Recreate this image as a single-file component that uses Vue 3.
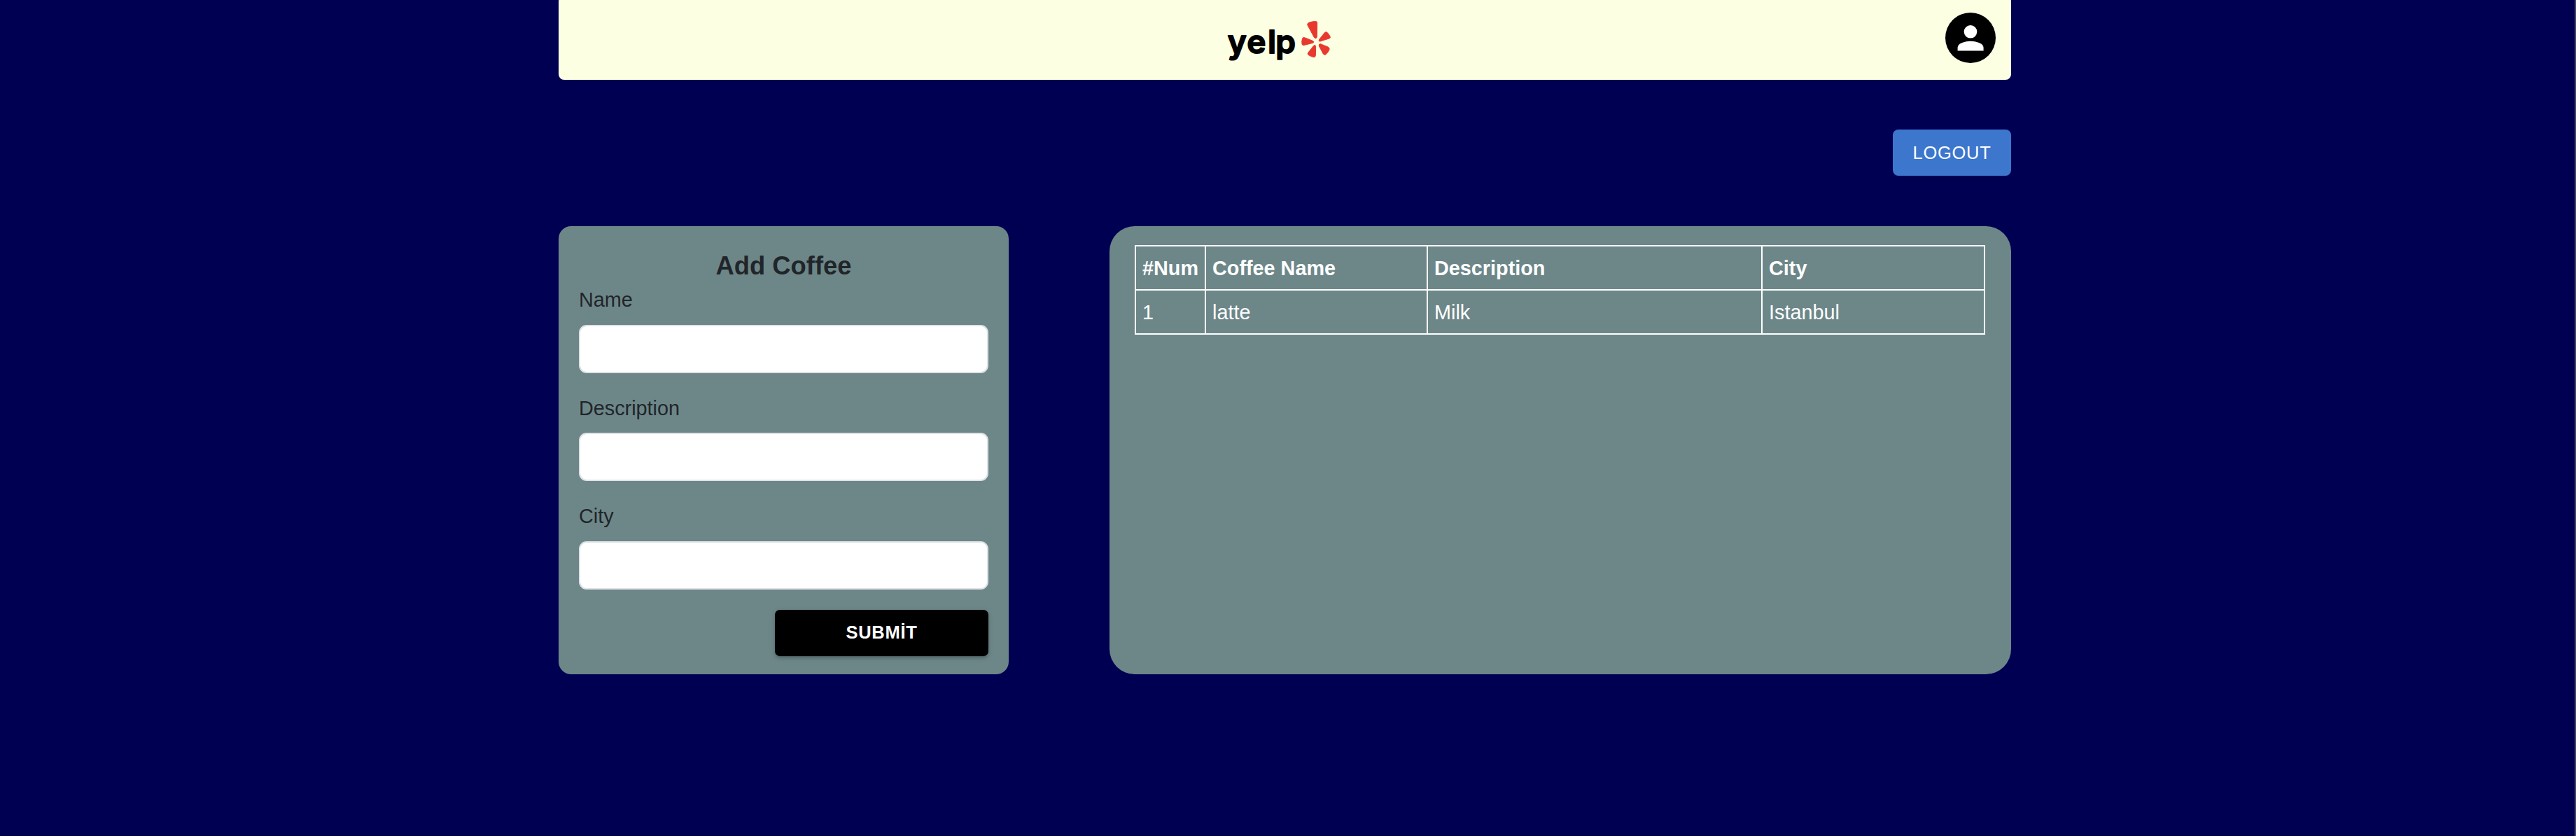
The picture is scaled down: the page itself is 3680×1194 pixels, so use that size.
<script setup>
const fields = ['Name', 'Description', 'City']
const columns = ['#Num', 'Coffee Name', 'Description', 'City']
const coffees = [{ id: 1, name: 'latte', description: 'Milk', city: 'Istanbul' }]
</script>

<template>
  <div class="page">
    <div class="container">
      <header class="navbar">
        <svg class="logo" viewBox="32 0 570 312" role="img" aria-label="yelp">
          <g class="word">
            <text x="66" y="187">y</text>
            <text x="143" y="187">e</text>
            <text x="226" y="187">l</text>
            <text x="258" y="187">p</text>
          </g>
          <g class="burst">
            <path d="M413 78Q410 71 418 67Q433 61 450 62Q454 63 454 68L453 129Q450 137 444 133L441 130Z" />
            <path d="M463 139L487 109Q492 105 497 109Q506 118 510 128Q511 133 505 135L467 147Q459 148 463 139Z" />
            <path d="M468 158L502 172Q508 176 506 183Q500 196 490 204Q485 207 480 201L462 167Q460 158 468 158Z" />
            <path d="M448 170L447 208Q446 215 440 215Q427 213 416 205Q412 201 415 196L439 166Q447 160 448 170Z" />
            <path d="M436 154L396 164Q391 165 389 159Q387 145 391 134Q395 129 400 131L435 145Q443 150 436 154Z" />
          </g>
        </svg>
        <svg class="avatar" viewBox="0 0 72 72" aria-label="Account">
          <circle cx="36" cy="36" r="36" />
          <circle class="fg" cx="36" cy="27.3" r="9.3" />
          <path class="fg" d="M17.6 54.6V50C17.6 43.5 29 40.7 36 40.7S54.6 43.5 54.6 50V54.6Z" />
        </svg>
      </header>

      <div class="actions"><button class="logout">LOGOUT</button></div>

      <main class="content">
        <form class="card form" @submit.prevent>
          <h4>Add Coffee</h4>
          <div v-for="f in fields" :key="f" class="field">
            <label :for="f">{{ f }}</label>
            <input :id="f" type="text" />
          </div>
          <button class="submit">SUBMİT</button>
        </form>

        <section class="card list">
          <table>
            <thead>
              <tr><th v-for="c in columns" :key="c">{{ c }}</th></tr>
            </thead>
            <tbody>
              <tr v-for="c in coffees" :key="c.id">
                <td>{{ c.id }}</td>
                <td>{{ c.name }}</td>
                <td>{{ c.description }}</td>
                <td>{{ c.city }}</td>
              </tr>
            </tbody>
          </table>
        </section>
      </main>
    </div>
  </div>
</template>

<style>
body {
  margin: 0;
  background: #000053;
}
</style>

<style scoped>
* {
  box-sizing: border-box;
}
.page {
  height: 1194px;
  padding-left: 798px;
  overflow: hidden;
  background: #000053;
  border-right: 2px solid #45455c;
  font-family: "Liberation Sans", Arial, Helvetica, sans-serif;
  font-size: 28.8px;
  line-height: 43.5px;
  color: #212529;
}
.container {
  width: 2075px;
}
.navbar {
  display: grid;
  grid-template-columns: 1fr 190px 1fr;
  height: 120px;
  margin-top: -6px;
  padding: 16px 0 0;
  background: #fdffe2;
  border-radius: 8px;
}
.logo {
  grid-column: 2;
  width: 190px;
  height: 104px;
}
.word {
  font-family: Inter, sans-serif;
  font-weight: 600;
  font-size: 129px;
  fill: #000;
  stroke: #000;
  stroke-width: 5;
  stroke-linejoin: round;
  transform: scale(1.07, 1.06);
}
.burst {
  fill: #e8392f;
  stroke: #e8392f;
  stroke-width: 3;
  stroke-linejoin: round;
}
.avatar {
  justify-self: end;
  width: 72px;
  height: 72px;
  margin: 8px 22px 0 0;
}
.fg {
  fill: #fff;
}
.actions {
  display: flex;
  justify-content: flex-end;
  margin-top: 71px;
}
button {
  height: 66px;
  padding: 1px 0 0;
  border: 0;
  font-family: inherit;
  font-size: 25.5px;
  line-height: 44.6px;
  letter-spacing: 0.02857em;
  color: #fff;
}
.logout {
  width: 169px;
  background: #3c76cd;
  border-radius: 8px;
}
.content {
  display: flex;
  justify-content: space-between;
  margin-top: 72px;
}
.card {
  height: 640px;
  background: #6d8789;
}
.form {
  display: flex;
  flex-direction: column;
  width: 643px;
  padding: 29px 29px 0;
  border-radius: 18px;
}
h4 {
  margin: 6px 0 0;
  font-size: 36.4px;
  line-height: 43px;
  text-align: center;
}
.field {
  display: flex;
  flex: none;
  flex-direction: column;
  height: 154.7px;
}
.field label {
  padding-top: 6px;
}
.field input {
  height: 69px;
  margin-top: 13px;
  padding: 0 20px;
  font: inherit;
  background: #fff;
  border: 2px solid #dee2e6;
  border-radius: 11px;
}
.submit {
  flex: none;
  align-self: flex-end;
  width: 305px;
  margin-top: 5.5px;
  padding-top: 0;
  font-weight: 700;
  background: #000;
  border-radius: 7px;
  box-shadow: 0 5px 2px -4px rgba(0, 0, 0, 0.2), 0 3px 4px rgba(0, 0, 0, 0.14), 0 2px 9px rgba(0, 0, 0, 0.12);
}
.list {
  width: 1288px;
  padding: 27px 36px;
  border-radius: 36px;
  color: #fff;
}
table {
  width: 1215px;
  border-collapse: collapse;
  table-layout: fixed;
}
th,
td {
  height: 63px;
  padding: 2px 9px 0;
  border: 2px solid #fff;
  text-align: left;
}
th:nth-child(1) {
  width: 100px;
}
th:nth-child(2) {
  width: 317px;
}
th:nth-child(3) {
  width: 478px;
}
</style>
